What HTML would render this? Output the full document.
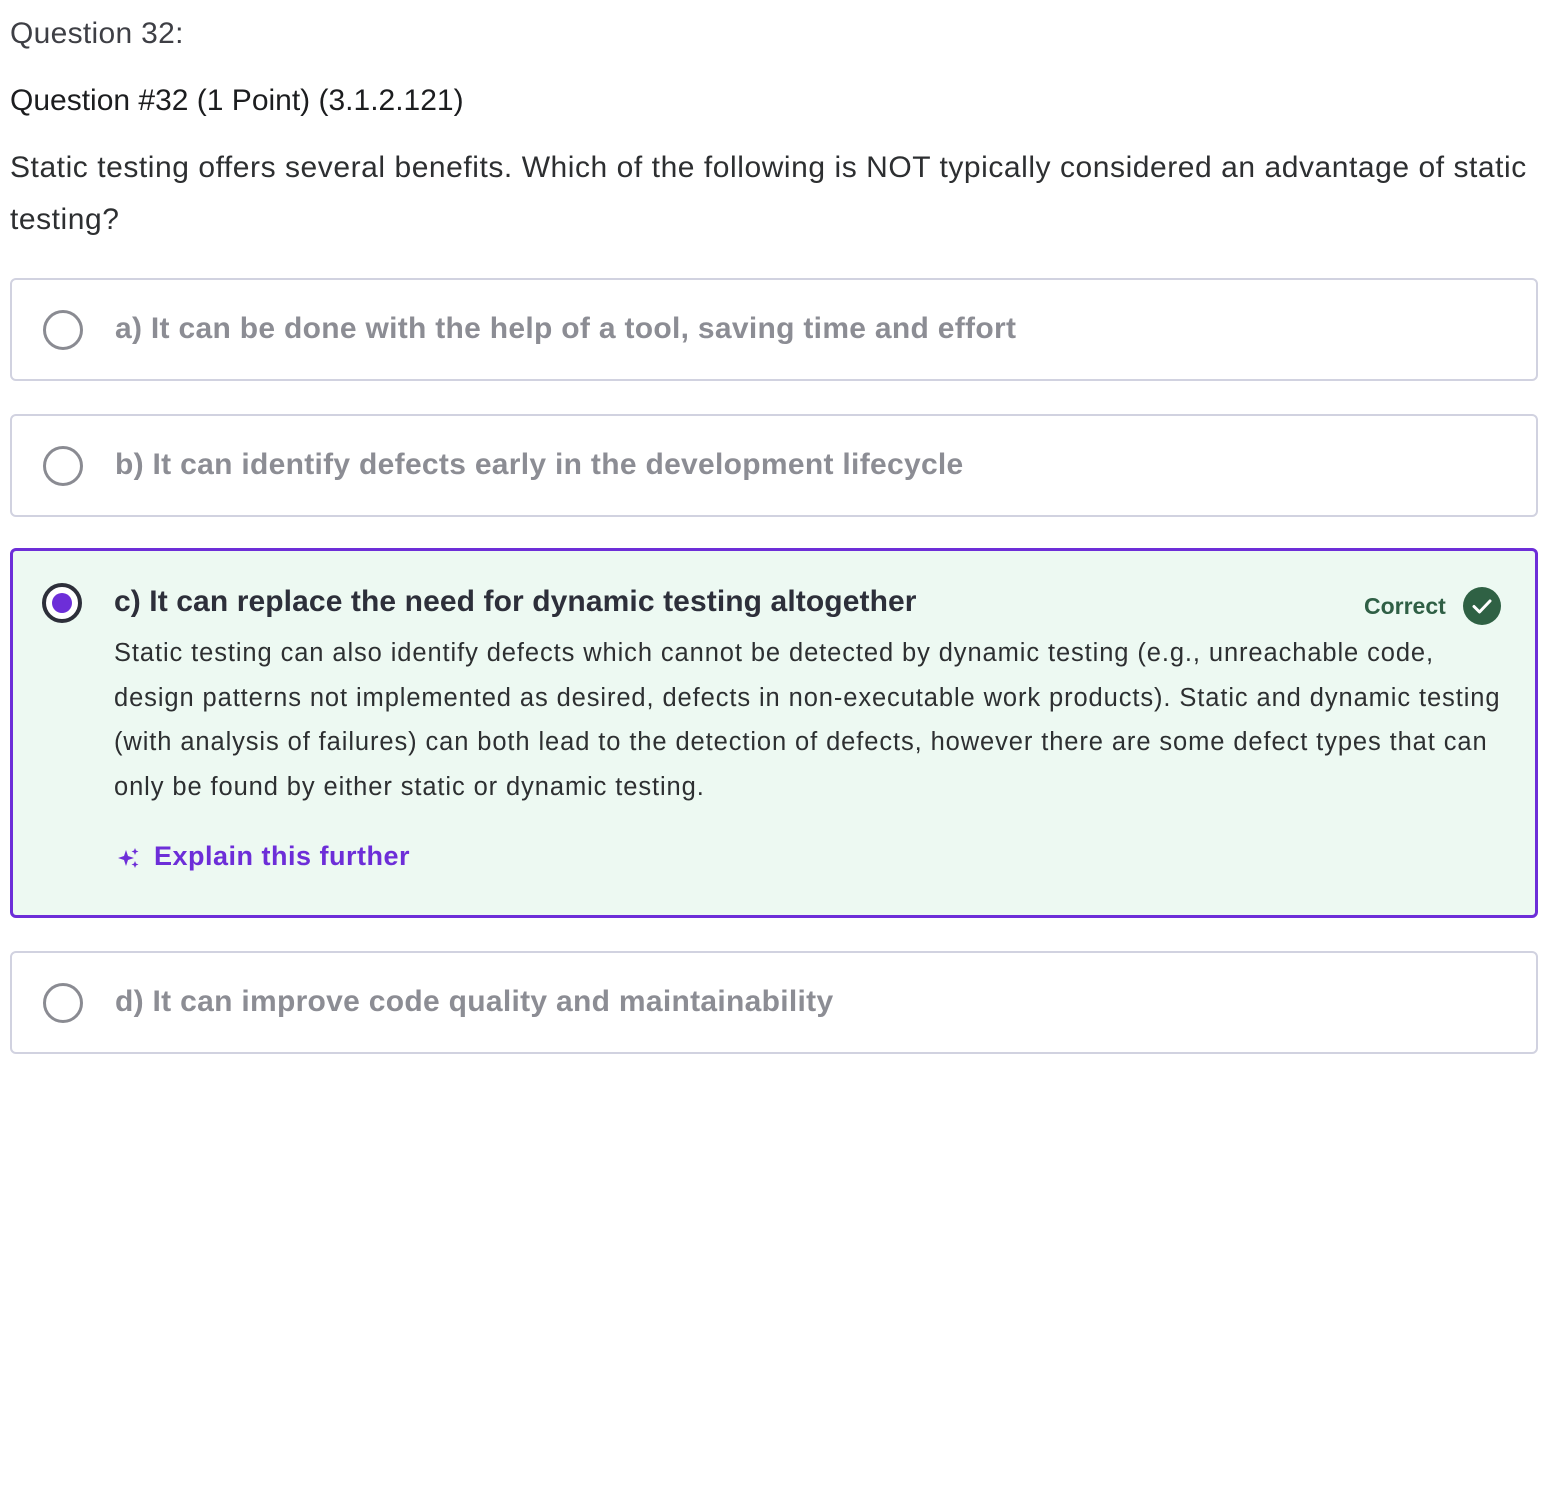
<!DOCTYPE html>
<html><head><style>
body{margin:0;background:#fff;font-family:"Liberation Sans",sans-serif;color:#2d2f31;width:1552px;height:1486px;position:relative}
.a{position:absolute;white-space:nowrap}
.box{position:absolute;left:10px;width:1528px;border:2px solid #d1d2e0;border-radius:6px;box-sizing:border-box}
.r{position:absolute;left:31px;width:40px;height:40px;border:3px solid #8a8b92;border-radius:50%;box-sizing:border-box}
.opt{position:absolute;left:103px;font-size:30px;letter-spacing:0.3px;font-weight:bold;color:#8c8d94;white-space:nowrap}
</style></head><body>
<div class="a" style="left:10px;top:17px;font-size:30px;letter-spacing:0.3px;color:#3e3f45">Question 32:</div>
<div class="a" style="left:10px;top:84px;font-size:30px;color:#1c1d1f">Question #32 (1 Point) (3.1.2.121)</div>
<div class="a" style="left:10px;top:142px;font-size:30px;letter-spacing:0.55px;line-height:52px;color:#2d2f31">Static testing offers several benefits. Which of the following is NOT typically considered an advantage of static<br>testing?</div>

<div class="box" style="top:278px;height:103px"><div class="r" style="top:30px"></div><div class="opt" style="top:32px">a) It can be done with the help of a tool, saving time and effort</div></div>
<div class="box" style="top:414px;height:103px"><div class="r" style="top:30px"></div><div class="opt" style="top:32px">b) It can identify defects early in the development lifecycle</div></div>
<div class="box" style="top:548px;height:370px;border:3px solid #6d2ed8;background:#edf9f2">
 <div class="r" style="left:29px;top:32px;border:4px solid #2d2f3a;background:#fff"><div style="position:absolute;left:6px;top:6px;width:20px;height:20px;border-radius:50%;background:#6d2ed8"></div></div>
 <div class="opt" style="left:101px;top:34px;color:#2d2f3a;letter-spacing:0.1px">c) It can replace the need for dynamic testing altogether</div>
 <div class="a" style="left:1351px;top:42px;font-size:23px;font-weight:bold;color:#2f5f45">Correct</div>
 <div style="position:absolute;left:1450px;top:36px;width:38px;height:38px;border-radius:50%;background:#2f6144"><svg width="38" height="38"><path d="M11 19.5l5.5 5.5L27 14" stroke="#fff" stroke-width="3" fill="none" stroke-linecap="round" stroke-linejoin="round"/></svg></div>
 <div class="a" style="left:101px;top:80px;font-size:25.5px;letter-spacing:0.9px;line-height:44.5px;color:#2d2f31">Static testing can also identify defects which cannot be detected by dynamic testing (e.g., unreachable code,<br>design patterns not implemented as desired, defects in non-executable work products). Static and dynamic testing<br>(with analysis of failures) can both lead to the detection of defects, however there are some defect types that can<br>only be found by either static or dynamic testing.</div>
 <svg class="a" style="left:104px;top:295px" width="24" height="24" viewBox="0 0 24 24" fill="#6d2ed8"><path d="M9 4l2 6 6 2-6 2-2 6-2-6-6-2 6-2z"/><path d="M18 2l1 2.5 2.5 1-2.5 1-1 2.5-1-2.5-2.5-1 2.5-1z"/><path d="M18 15l1 2.5 2.5 1-2.5 1-1 2.5-1-2.5-2.5-1 2.5-1z"/></svg>
 <div class="a" style="left:141px;top:290px;font-size:27px;letter-spacing:0.5px;font-weight:bold;color:#6d2ed8">Explain this further</div>
</div>
<div class="box" style="top:951px;height:103px"><div class="r" style="top:30px"></div><div class="opt" style="top:32px">d) It can improve code quality and maintainability</div></div>
</body></html>
